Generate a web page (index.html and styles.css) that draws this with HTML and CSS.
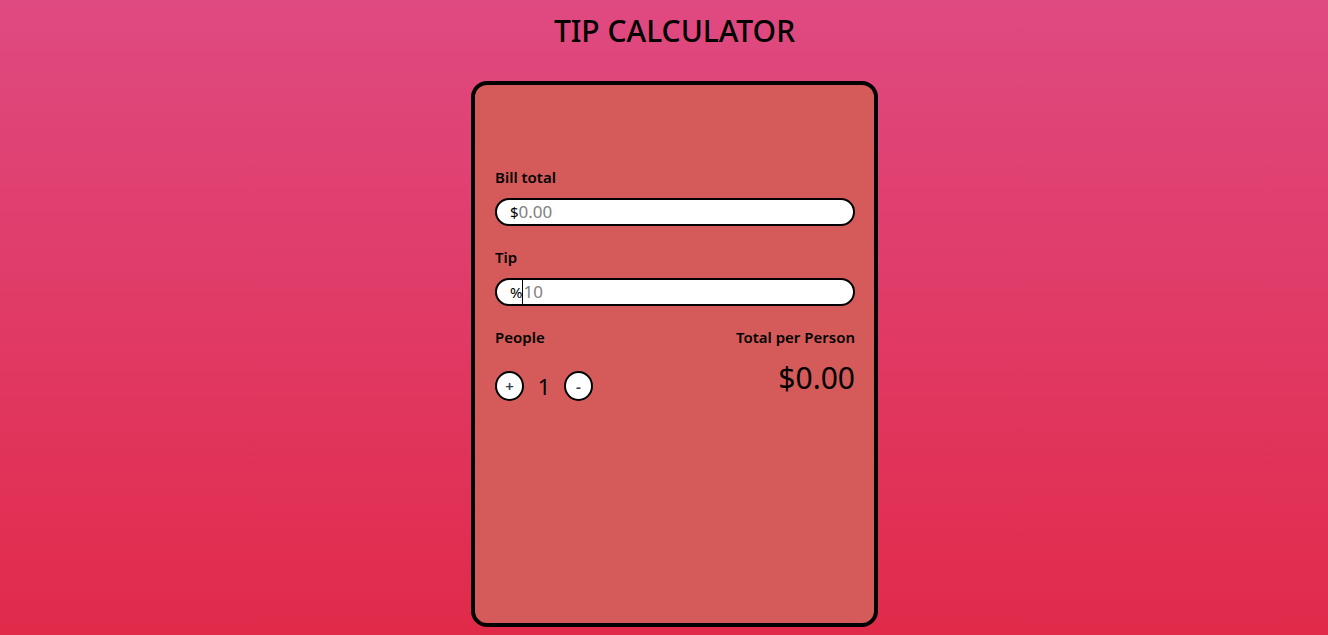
FILE: index.html
```html
<!DOCTYPE html>
<html lang="en">
<head>
<meta charset="utf-8">
<meta name="viewport" content="width=device-width, initial-scale=1">
<title>Tip Calculator</title>
<link rel="stylesheet" href="styles.css">
</head>
<body>
<main class="page">
  <h1 class="title">TIP CALCULATOR</h1>
  <form class="card">
    <div class="field">
      <label class="label" for="bill">Bill total</label>
      <div class="box">
        <span class="sign">$</span>
        <input class="input" id="bill" type="text" inputmode="decimal" placeholder="0.00">
      </div>
    </div>
    <div class="field">
      <label class="label" for="tip">Tip</label>
      <div class="box">
        <span class="sign">%</span>
        <span class="caret"></span>
        <input class="input" id="tip" type="text" inputmode="numeric" placeholder="10">
      </div>
    </div>
    <div class="summary">
      <section>
        <h2 class="label">People</h2>
        <div class="stepper">
          <button class="step" type="button" aria-label="Add a person">+</button>
          <output class="count">1</output>
          <button class="step" type="button" aria-label="Remove a person">-</button>
        </div>
      </section>
      <section class="result">
        <h2 class="label">Total per Person</h2>
        <output class="total">$0.00</output>
      </section>
    </div>
  </form>
</main>
</body>
</html>
```
FILE: styles.css
```css
* {
  box-sizing: border-box;
}

body {
  margin: 0;
  min-height: 100vh;
  background: linear-gradient(#df4a81, #e12a4a);
  font-family: "Noto Sans", "Open Sans", sans-serif;
  color: #000;
}

.page {
  display: flex;
  flex-direction: column;
  align-items: center;
  gap: 30px;
  min-height: 100vh;
  padding: 11px 0 8px 21px;
}

.title {
  margin: 0;
  font-size: 30px;
  font-weight: 500;
  line-height: 40px;
}

.card {
  flex: 1;
  width: 100%;
  max-width: 407px;
  padding: 80px 19px 20px 20px;
  border: 4px solid #000;
  border-radius: 16px;
  background: #d45b59;
}

.field {
  margin-bottom: 19px;
}

.label {
  display: block;
  margin: 0;
  font-size: 15px;
  font-weight: 600;
  line-height: 24px;
}

.box {
  display: flex;
  align-items: center;
  height: 28px;
  margin-top: 9px;
  padding: 0 13px;
  border: 2px solid #000;
  border-radius: 14px;
  background: #fff;
}

.sign {
  font-size: 15px;
}

.caret {
  width: 1px;
  height: 24px;
  background: #000;
}

.input {
  flex: 1;
  min-width: 0;
  padding: 0;
  border: 0;
  outline: 0;
  background: transparent;
  font: 400 17px/24px "Noto Sans", "Open Sans", sans-serif;
}

.input::placeholder {
  color: #808080;
  opacity: 1;
}

.summary {
  display: flex;
  justify-content: space-between;
}

.stepper {
  display: flex;
  align-items: center;
  margin-top: 22px;
}

.step {
  width: 29px;
  height: 30px;
  padding: 0;
  border: 2px solid #000;
  border-radius: 50%;
  background: #fff;
  color: #2c3e50;
  font: 600 15px/20px "Noto Sans", "Open Sans", sans-serif;
}

.count {
  width: 40px;
  font-size: 22px;
  line-height: 30px;
  text-align: center;
}

.result {
  text-align: right;
}

.total {
  display: block;
  margin-top: 9px;
  font-size: 30px;
  font-weight: 400;
  line-height: 40px;
}
```
